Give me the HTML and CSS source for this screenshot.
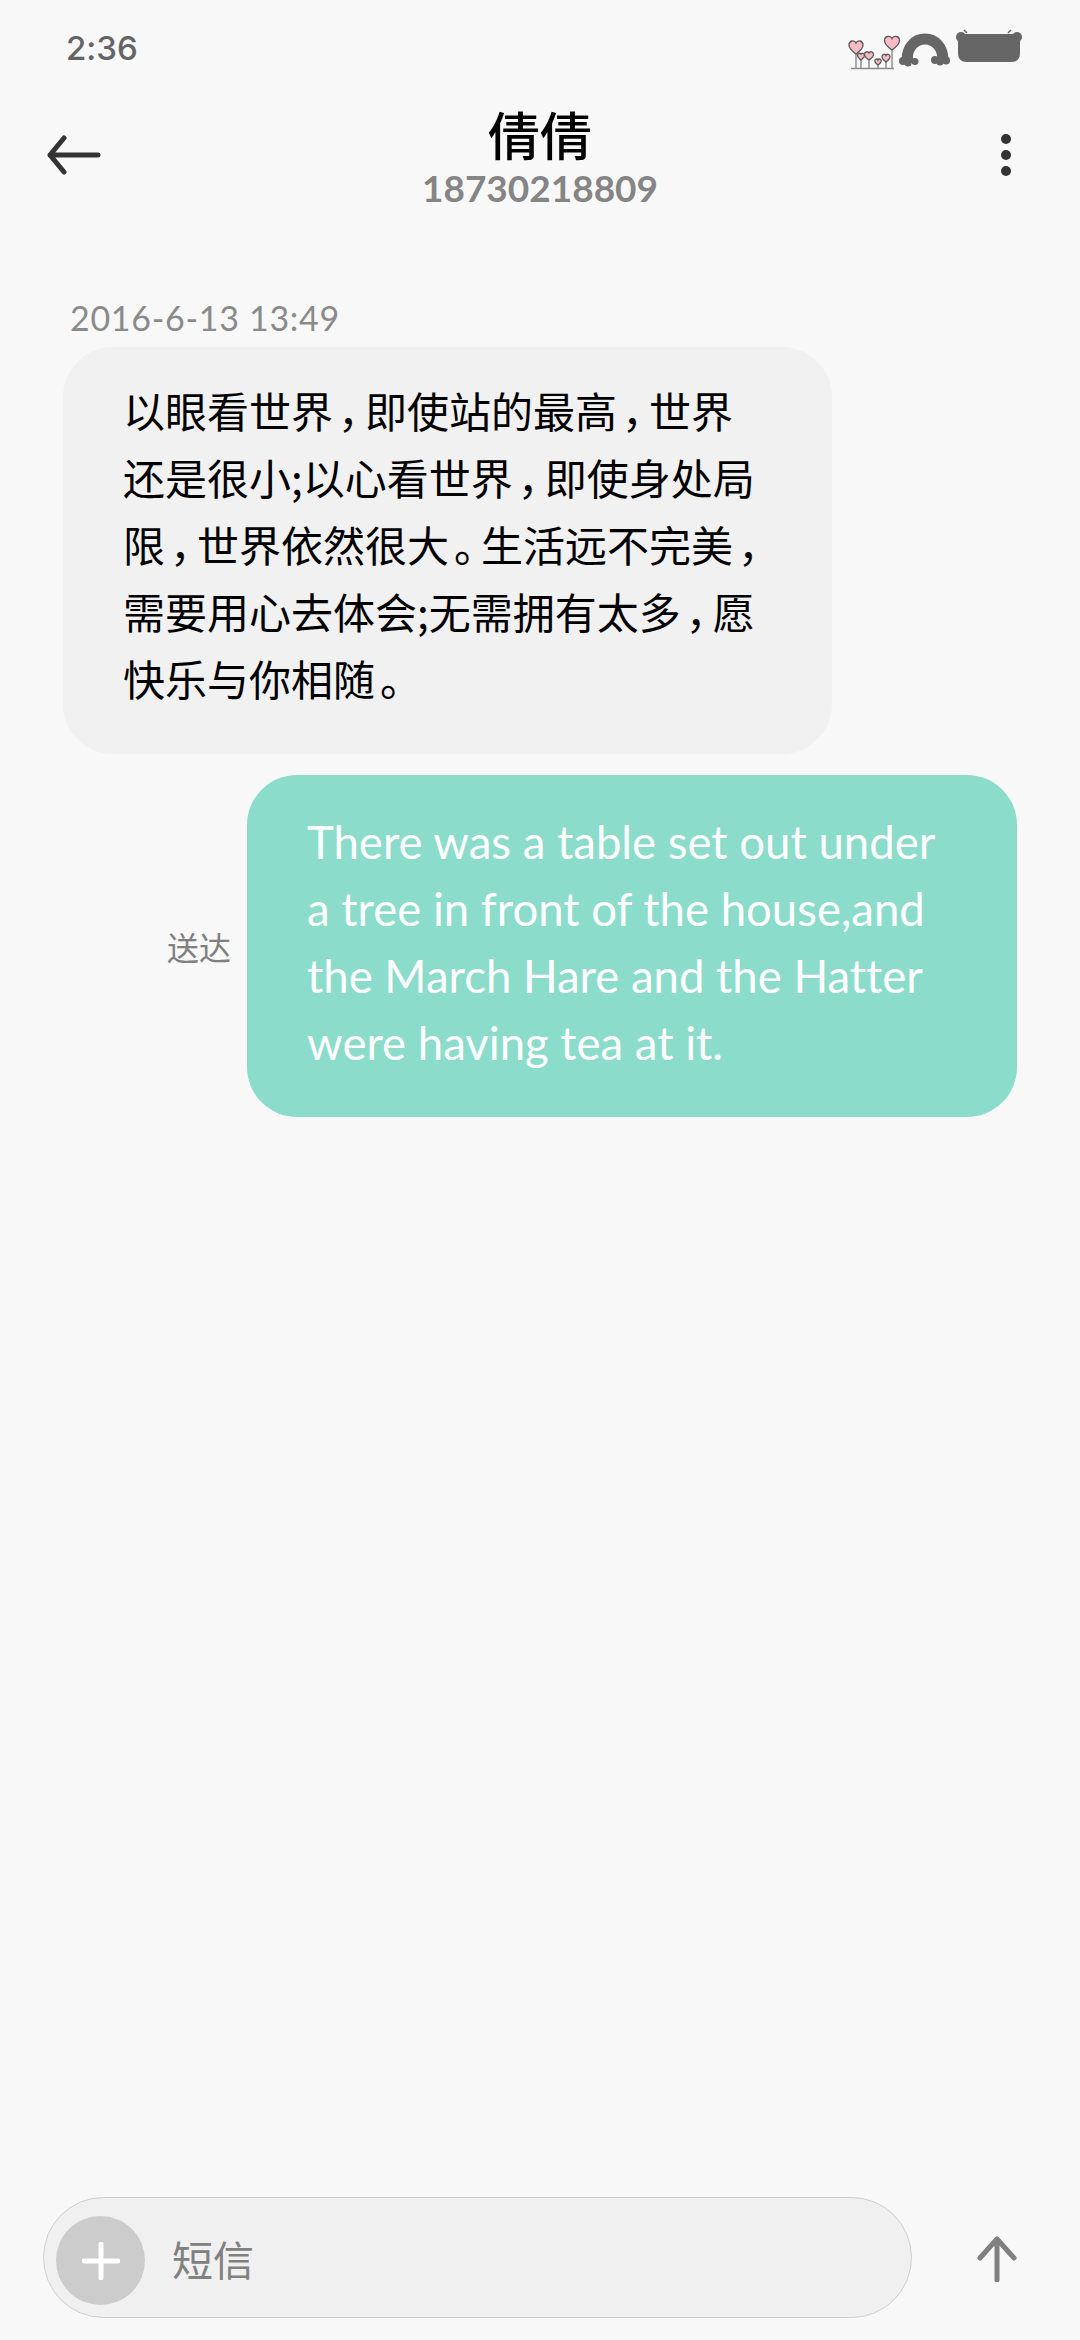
FILE: index.html
```html
<!DOCTYPE html>
<html lang="zh">
<head>
<meta charset="utf-8">
<title>倩倩</title>
<link rel="stylesheet" href="styles.css">
</head>
<body>
<div class="screen">
  <div class="status">
    <span class="time">2:36</span>
    <svg class="status-icons" width="180" height="44" viewBox="845 26 180 44">
      <g fill="none" stroke="#8a8a8a" stroke-width="1.4">
        <path d="M851 68.500H894"/>
        <path d="M856 50V68M861 58V68M869 56V68M878 63V68M886 60V68M892 47V68"/>
      </g>
      <g fill="#f9bcc4" stroke="#5a5a5a" stroke-width="1.3">
        <path d="M856 54c-3-2.500-7-5-7-9 0-4.500 5.500-5.500 7-2 1.500-3.500 7-2.500 7 2 0 4-4 6.500-7 9z"/>
        <path d="M892 50c-3.500-2.500-7.500-5.500-7.500-9.500 0-4.500 6-5.500 7.500-2 1.500-3.500 7.500-2.500 7.500 2 0 4-4 7-7.500 9.500z"/>
        <path d="M861 60c-1.500-1.500-3.500-2.500-3.500-4.500 0-2.500 3-3 3.500-1 .5-2 3.500-1.500 3.500 1 0 2-2 3-3.500 4.500z"/>
        <path d="M869 60c-2-1.500-4.500-3-4.500-5.500 0-3 3.500-3.500 4.500-1.500 1-2 4.500-1.500 4.500 1.500 0 2.500-2.500 4-4.500 5.500z"/>
        <path d="M878 65c-1.500-1.200-3.200-2.200-3.200-4 0-2.200 2.600-2.600 3.200-1 .6-1.600 3.200-1.200 3.200 1 0 1.800-1.700 2.800-3.200 4z"/>
        <path d="M886 62c-2-1.500-4-3-4-5.200 0-2.800 3.200-3.200 4-1.400 .8-1.800 4-1.400 4 1.400 0 2.200-2 3.700-4 5.200z"/>
      </g>
      <path d="M907 60C907 47 915 39 925 39S943 47 943 60" fill="none" stroke="#666" stroke-width="11"/>
      <g fill="#666">
        <circle cx="903" cy="61" r="4"/><circle cx="909" cy="59.500" r="4.500"/><circle cx="915" cy="61.500" r="3.500"/><circle cx="908" cy="63" r="3.500"/>
        <circle cx="935" cy="60" r="4"/><circle cx="941" cy="59" r="4.500"/><circle cx="946" cy="60.500" r="4"/><circle cx="940" cy="62" r="3.500"/>
        <path d="M958 34H1020V53C1020 59 1017 62 1011 62H967C961 62 958 59 958 53Z"/>
        <circle cx="961" cy="37" r="5"/><circle cx="1017" cy="37" r="5"/>
      </g>
      <path d="M964 30L967 33M1011 30L1008 33" stroke="#666" stroke-width="1.500" fill="none"/>
    </svg>
  </div>

  <header class="topbar">
    <svg class="back" width="56" height="40" viewBox="0 0 56 40">
      <path d="M52 20H4M18 3L4 20 18 37" fill="none" stroke="#333" stroke-width="5" stroke-linecap="round" stroke-linejoin="round"/>
    </svg>
    <div class="contact">
      <div class="name">倩倩</div>
      <div class="phone">18730218809</div>
    </div>
    <div class="more"><i></i><i></i><i></i></div>
  </header>

  <main class="thread">
    <div class="date">2016-6-13 13:49</div>
    <div class="bubble in">以眼看世界<span class="p">&#xFF0C;</span>即使站的最高<span class="p">&#xFF0C;</span>世界<br>还是很小;以心看世界<span class="p">&#xFF0C;</span>即使身处局<br>限<span class="p">&#xFF0C;</span>世界依然很大<span class="p">&#x3002;</span>生活远不完美<span class="p">&#xFF0C;</span><br>需要用心去体会;无需拥有太多<span class="p">&#xFF0C;</span>愿<br>快乐与你相随<span class="p">&#x3002;</span></div>
    <div class="out-row">
      <span class="delivered">送达</span>
      <div class="bubble out">There was a table set out under<br>a tree in front of the house,and<br>the March Hare and the Hatter<br>were having tea at it.</div>
    </div>
  </main>

  <footer class="composer">
    <div class="field">
      <div class="plus"><svg width="38" height="38" viewBox="0 0 38 38"><path d="M19 2V36M2 19H36" stroke="#fff" stroke-width="5" stroke-linecap="round"/></svg></div>
      <span class="placeholder">短信</span>
    </div>
    <svg class="send" width="40" height="46" viewBox="0 0 40 46">
      <path d="M20 44V4M3 22L20 3 37 22" fill="none" stroke="#808080" stroke-width="5" stroke-linecap="round" stroke-linejoin="round"/>
    </svg>
  </footer>
</div>
</body>
</html>
```

FILE: styles.css
```css
* { box-sizing: border-box; }
html, body { margin: 0; padding: 0; }
body {
  background: #f8f8f8;
  font-family: "Lato", "Noto Sans CJK SC", sans-serif;
  font-variant-ligatures: none;
}
.screen {
  width: 1080px;
  height: 2340px;
  display: flex;
  flex-direction: column;
  overflow: hidden;
}
.status {
  height: 96px;
  display: flex;
  justify-content: space-between;
  align-items: flex-start;
  padding: 26px 55px 0 66px;
}
.time {
  font-family: "Inter", sans-serif;
  font-size: 33px;
  line-height: 44px;
  font-weight: 550;
  color: #646464;
}
.status-icons { flex: none; }
.topbar {
  height: 120px;
  display: flex;
  align-items: flex-start;
  justify-content: space-between;
  padding: 0 69px 0 46px;
  position: relative;
}
.back { margin-top: 39px; }
.contact {
  position: absolute;
  left: 0;
  right: 0;
  top: 7px;
  text-align: center;
}
.name {
  font-family: "Noto Sans CJK SC", sans-serif;
  font-size: 52px;
  line-height: 62px;
  font-weight: 500;
  color: #000;
}
.phone {
  font-size: 37px;
  line-height: 40px;
  margin-top: 3px;
  font-weight: 700;
  color: #858585;
}
.more {
  display: flex;
  flex-direction: column;
  gap: 6px;
  margin-top: 38px;
}
.more i {
  display: block;
  width: 10px;
  height: 10px;
  border-radius: 50%;
  background: #333;
}
.thread {
  flex: 1;
  padding: 80px 63px 0;
  display: flex;
  flex-direction: column;
}
.date {
  font-size: 34px;
  line-height: 44px;
  letter-spacing: 0.7px;
  color: #8a8a8a;
  margin: 0 0 7px 7px;
}
.bubble {
  font-size: 45.500px;
  line-height: 67px;
  border-radius: 50px;
  padding: 33px 40px 41px 60px;
}
.in {
  width: 769px;
  background: #f1f1f1;
  color: #000;
  font-family: "Noto Sans CJK SC", sans-serif;
  font-size: 42px;
  padding-top: 29px;
  padding-bottom: 43px;
}
.p {
  font-feature-settings: "halt";
  margin-left: 5px;
  margin-right: 6px;
}
.out-row {
  display: flex;
  align-items: center;
  justify-content: flex-end;
  gap: 16px;
  margin-top: 21px;
}
.out {
  width: 770px;
  background: #8bdcca;
  color: #fff;
}
.delivered {
  font-family: "Noto Sans CJK SC", sans-serif;
  font-size: 32px;
  color: #808080;
}
.composer {
  height: 165px;
  padding: 0 63px 0 43px;
  display: flex;
  align-items: center;
  justify-content: space-between;
}
.field {
  width: 869px;
  height: 121px;
  border: 1.500px solid #cfcfcf;
  border-radius: 61px;
  background: #f0f0f0;
  display: flex;
  align-items: center;
  padding-left: 12px;
  gap: 27px;
}
.plus {
  width: 89px;
  height: 89px;
  margin-top: 6px;
  border-radius: 50%;
  background: #cccccc;
  display: flex;
  align-items: center;
  justify-content: center;
}
.plus svg { display: block; }
.placeholder {
  font-family: "Noto Sans CJK SC", sans-serif;
  font-size: 41px;
  color: #808080;
}
.send { flex: none; margin-top: 3px; }
```
